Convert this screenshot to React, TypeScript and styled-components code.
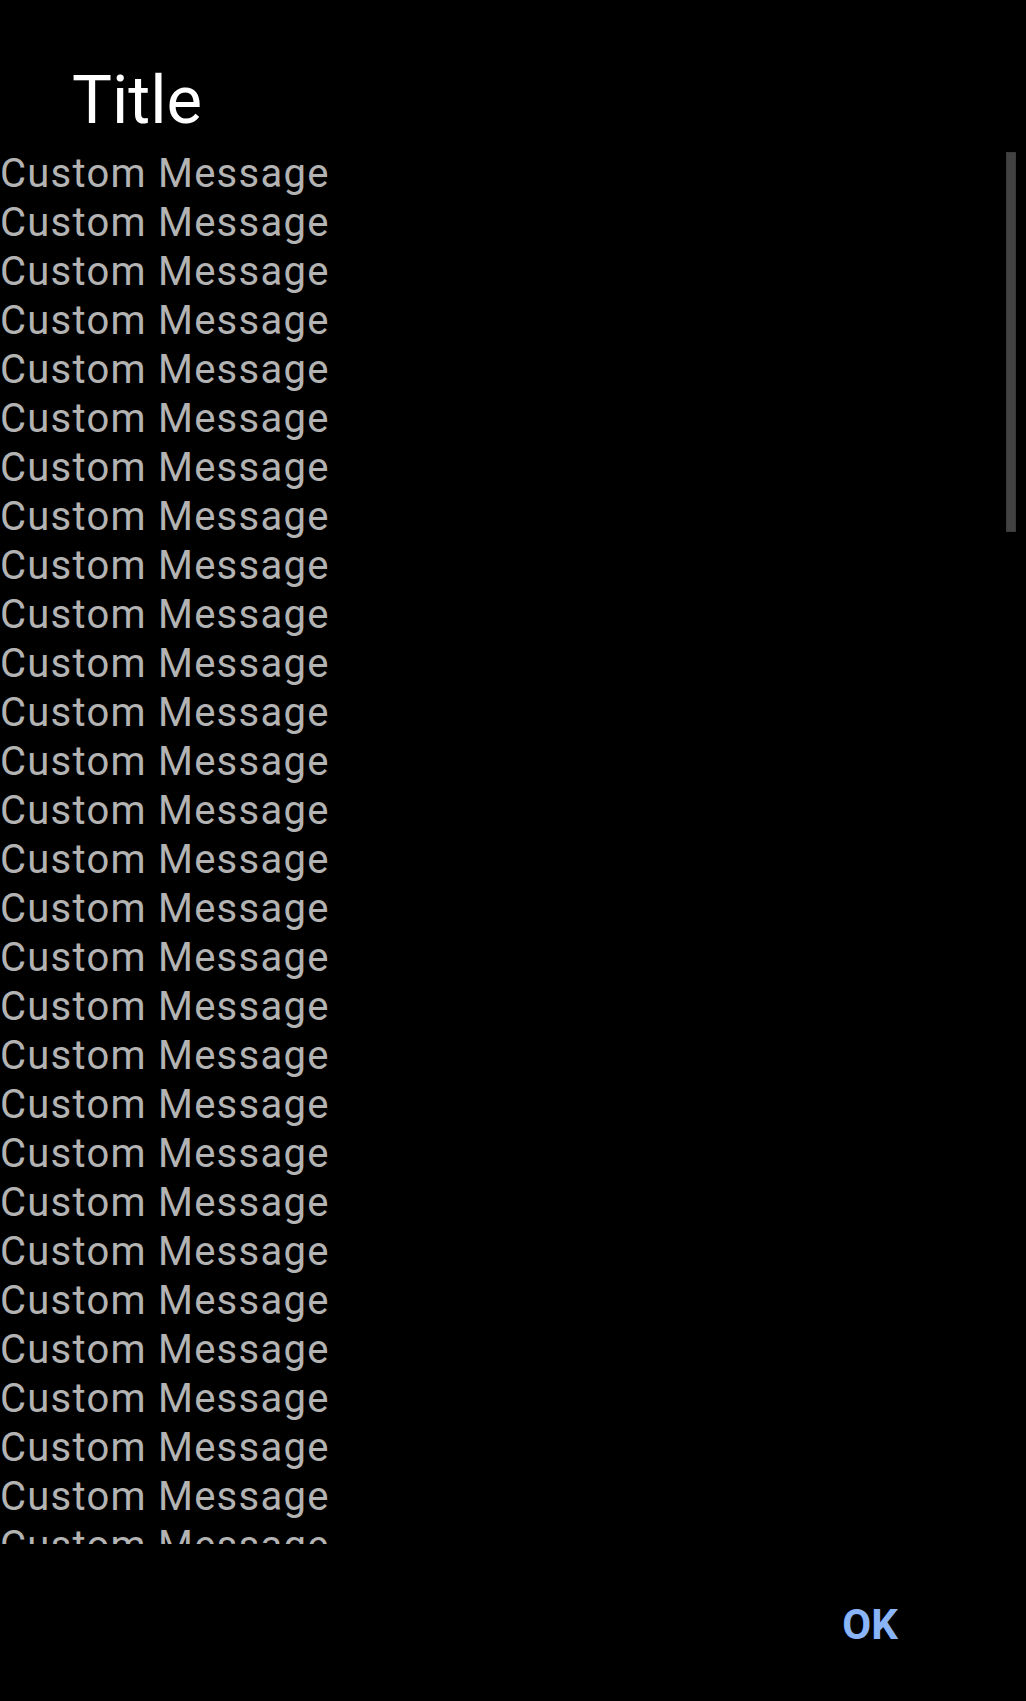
import React from "react";
import styled, { createGlobalStyle } from "styled-components";

const GlobalStyle = createGlobalStyle`
  html, body {
    margin: 0;
    padding: 0;
    background: #000000;
  }
  body {
    font-family: Roboto, "Noto Sans", "Liberation Sans", sans-serif;
  }
`;

const Dialog = styled.div`
  width: 1026px;
  height: 1701px;
  background: #000000;
  display: flex;
  flex-direction: column;
  overflow: hidden;
`;

const Title = styled.h1`
  margin: 0;
  padding: 60px 0 0 72px;
  font-family: Roboto, "Liberation Sans", sans-serif;
  font-weight: 400;
  font-size: 67px;
  line-height: 80px;
  color: #ffffff;
`;

const MessageScroll = styled.div`
  position: relative;
  margin-top: 9px;
  height: 1395px;
  overflow: hidden;
`;

const MessageLine = styled.div`
  font-family: Roboto, "Liberation Sans", sans-serif;
  font-size: 40px;
  line-height: 49px;
  letter-spacing: 1.25px;
  color: #b3b3b3;
  white-space: nowrap;
`;

const ScrollThumb = styled.div`
  position: absolute;
  top: 3px;
  right: 10px;
  width: 10px;
  height: 380px;
  background: #424242;
  box-shadow: inset 0 0 0 1px #3a3a3a;
`;

const ButtonBar = styled.div`
  display: flex;
  justify-content: flex-end;
  padding: 56px 128px 0 0;
`;

const TextButton = styled.button`
  background: none;
  border: none;
  padding: 0;
  font-family: Roboto, "Liberation Sans", sans-serif;
  font-weight: 700;
  font-size: 42px;
  line-height: 50px;
  color: #8ab4f8;
  cursor: pointer;
`;

const lines = Array.from({ length: 40 }, (_, i) => i);

export default function App() {
  return (
    <>
      <GlobalStyle />
      <Dialog>
        <Title>Title</Title>
        <MessageScroll>
          {lines.map((i) => (
            <MessageLine key={i}>Custom Message</MessageLine>
          ))}
          <ScrollThumb />
        </MessageScroll>
        <ButtonBar>
          <TextButton>OK</TextButton>
        </ButtonBar>
      </Dialog>
    </>
  );
}
